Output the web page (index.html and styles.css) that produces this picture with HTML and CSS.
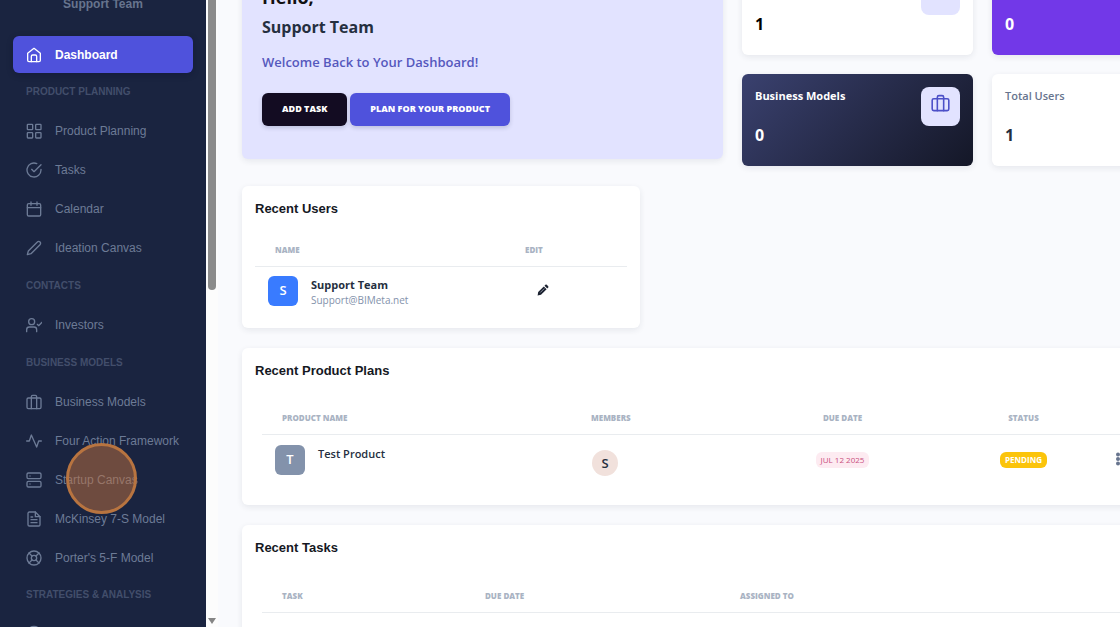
FILE: index.html
```html
<!DOCTYPE html>
<html lang="en">
<head>
<meta charset="utf-8">
<meta name="viewport" content="width=device-width, initial-scale=1">
<title>Dashboard</title>
<link rel="stylesheet" href="styles.css">
</head>
<body>
<div class="app">
  <aside class="sidebar">
    <div class="profile">Support Team</div>
    <nav class="nav" aria-label="Main">
      <a class="nav-link active" href="#"><svg class="icon" viewBox="0 0 24 24"><path d="M2.500 9.500 12 2l9.500 7.500V20a2 2 0 0 1-2 2h-15a2 2 0 0 1-2-2z"/><path d="M8 22v-8a2 2 0 0 1 2-2h4a2 2 0 0 1 2 2v8"/></svg>Dashboard</a>
      <h2 class="nav-title">PRODUCT PLANNING</h2>
      <a class="nav-link" href="#"><svg class="icon" viewBox="0 0 24 24"><rect x="2" y="2" width="8" height="8" rx="1"/><rect x="14.500" y="2" width="8" height="8" rx="1"/><rect x="14.500" y="14.500" width="8" height="8" rx="1"/><rect x="2" y="14.500" width="8" height="8" rx="1"/></svg>Product Planning</a>
      <a class="nav-link" href="#"><svg class="icon" viewBox="0 0 24 24"><path d="M22.500 11v1a10.500 10.500 0 1 1-6.300-9.600"/><path d="M22.500 4 12 14.500l-3.500-3.500"/></svg>Tasks</a>
      <a class="nav-link" href="#"><svg class="icon" viewBox="0 0 24 24"><rect x="2" y="4" width="20" height="18.500" rx="2"/><path d="M16.500 1.500v5M7.500 1.500v5M2 10h20"/></svg>Calendar</a>
      <a class="nav-link" href="#"><svg class="icon" viewBox="0 0 24 24"><path d="M17 3a2.830 2.830 0 1 1 4 4L7.500 20.500 2 22l1.500-5.500z"/></svg>Ideation Canvas</a>
      <h2 class="nav-title">CONTACTS</h2>
      <a class="nav-link" href="#"><svg class="icon" viewBox="0 0 24 24"><path d="M16 22v-3a4 4 0 0 0-4-4H5a4 4 0 0 0-4 4v3"/><circle cx="8.500" cy="7" r="4.500"/><path d="m17 11 2 2 5-5"/></svg>Investors</a>
      <h2 class="nav-title">BUSINESS MODELS</h2>
      <a class="nav-link" href="#"><svg class="icon" viewBox="0 0 24 24"><rect x="1.500" y="6" width="21" height="16" rx="2"/><path d="M16 22V4a2 2 0 0 0-2-2h-4a2 2 0 0 0-2 2v18"/></svg>Business Models</a>
      <a class="nav-link" href="#"><svg class="icon" viewBox="0 0 24 24"><path d="M23 12h-4l-3 9L8 3l-3 9H1"/></svg>Four Action Framework</a>
      <a class="nav-link" href="#"><svg class="icon" viewBox="0 0 24 24"><rect x="1.500" y="1.500" width="21" height="8.500" rx="2"/><rect x="1.500" y="14" width="21" height="8.500" rx="2"/><path d="M6 6h.01M6 18h.01"/></svg>Startup Canvas<span class="click-marker"></span></a>
      <a class="nav-link" href="#"><svg class="icon" viewBox="0 0 24 24"><path d="M14 1.500H5a2 2 0 0 0-2 2v17a2 2 0 0 0 2 2h14a2 2 0 0 0 2-2V8.500z"/><path d="M14 1.500v7h7M16.500 13h-9M16.500 17.500h-9M10 9H7.500"/></svg>McKinsey 7-S Model</a>
      <a class="nav-link" href="#"><svg class="icon" viewBox="0 0 24 24"><circle cx="12" cy="12" r="10.500"/><circle cx="12" cy="12" r="4"/><path d="m4.500 4.500 4.500 4.500M15 15l4.500 4.500M15 9l4.500-4.500M4.500 19.500 9 15"/></svg>Porter's 5-F Model</a>
      <h2 class="nav-title">STRATEGIES &amp; ANALYSIS</h2>
      <a class="nav-link" href="#" aria-label="More"><svg class="icon" viewBox="0 0 24 24"><circle cx="12" cy="12" r="10"/></svg></a>
    </nav>
  </aside>
  <div class="scrollbar" aria-hidden="true"><span class="thumb"></span><span class="arrow"></span></div>

  <main class="main">
    <div class="content">
      <div class="top">
        <section class="card banner">
          <h1 class="hello">Hello,</h1>
          <p class="who">Support Team</p>
          <p class="welcome">Welcome Back to Your Dashboard!</p>
          <div class="actions">
            <button class="btn dark" type="button">ADD TASK</button>
            <button class="btn" type="button">PLAN FOR YOUR PRODUCT</button>
          </div>
        </section>
        <div class="stats">
          <section class="card stat black"><div><h2 class="label">&nbsp;</h2><p class="value">1</p></div><span class="badge"></span></section>
          <section class="card stat purple"><div><h2 class="label">&nbsp;</h2><p class="value">0</p></div></section>
          <section class="card stat navy"><div><h2 class="label">Business Models</h2><p class="value">0</p></div><span class="badge"><svg class="icon" viewBox="0 0 24 24"><rect x="1.500" y="6" width="21" height="15" rx="2"/><path d="M16 21V4a2 2 0 0 0-2-2h-4a2 2 0 0 0-2 2v17"/></svg></span></section>
          <section class="card stat"><div><h2 class="label">Total Users</h2><p class="value">1</p></div></section>
        </div>
      </div>

      <section class="card panel users">
        <h2 class="panel-title">Recent Users</h2>
        <table class="table">
          <colgroup><col class="c-user"><col></colgroup>
          <thead><tr><th>NAME</th><th>EDIT</th></tr></thead>
          <tbody><tr>
            <td class="user"><div class="person"><span class="avatar blue">S</span><span><strong class="name">Support Team</strong><span class="mail">Support@BIMeta.net</span></span></div></td>
            <td class="edit"><button class="icon-btn" type="button" aria-label="Edit"><svg class="pencil" viewBox="0 0 12 12"><path d="M1.200 8 6.800 2.400 9.600 5.200 4 10.800 .6 11.400z"/><path d="M7.500 1.700 8.400.8a1 1 0 0 1 1.400 0l1.400 1.400a1 1 0 0 1 0 1.400l-.9.900z"/><path class="shine" d="M3.300 8.500 7.300 4.500"/></svg></button></td>
          </tr></tbody>
        </table>
      </section>

      <section class="card panel plans">
        <h2 class="panel-title">Recent Product Plans</h2>
        <table class="table inset">
          <colgroup><col class="c-plan"><col class="c-mid"><col class="c-mid"><col class="c-mid"><col></colgroup>
          <thead><tr><th>PRODUCT NAME</th><th>MEMBERS</th><th class="center">DUE DATE</th><th class="center">STATUS</th><th></th></tr></thead>
          <tbody><tr>
            <td><div class="person"><span class="avatar slate">T</span><strong class="name product">Test Product</strong></div></td>
            <td class="members"><span class="member">S</span></td>
            <td class="center"><span class="pill pink">JUL 12 2025</span></td>
            <td class="center"><span class="pill yellow">PENDING</span></td>
            <td class="more"><button class="icon-btn" type="button" aria-label="More actions"><svg class="dots" viewBox="0 0 4 14"><circle cx="2" cy="2.500" r="2"/><circle cx="2" cy="7" r="2"/><circle cx="2" cy="11.500" r="2"/></svg></button></td>
          </tr></tbody>
        </table>
      </section>

      <section class="card panel">
        <h2 class="panel-title">Recent Tasks</h2>
        <table class="table inset">
          <colgroup><col class="c-task"><col class="c-date"><col></colgroup>
          <thead><tr><th>TASK</th><th>DUE DATE</th><th>ASSIGNED TO</th></tr></thead>
          <tbody><tr><td colspan="3">&nbsp;</td></tr></tbody>
        </table>
      </section>
    </div>
  </main>
</div>
</body>
</html>
```
FILE: styles.css
```css
* { box-sizing: border-box; }
body {
  margin: 0;
  font-family: "Open Sans", "Noto Sans", sans-serif;
  font-size: 12px;
  color: #252f40;
  background: #f9fafd;
}
h1, h2, p { margin: 0; }
.app { display: flex; height: 100vh; overflow: hidden; }

.sidebar {
  flex: 0 0 206px;
  overflow: hidden;
  padding: 0 13px;
  background: #1a2440;
  font-family: "Liberation Sans", Arial, sans-serif;
}
.profile {
  margin-top: -4px;
  padding-bottom: 24px;
  line-height: 16px;
  text-align: center;
  font-weight: 700;
  color: #67748e;
}
.nav { display: flex; flex-direction: column; }
.nav-link {
  position: relative;
  display: flex;
  align-items: center;
  gap: 13px;
  height: 39px;
  padding: 0 13px;
  border-radius: 6px;
  color: #6d7b96;
  text-decoration: none;
  white-space: nowrap;
  flex: none;
}
.nav-link.active {
  height: 37px;
  background: #4f52dc;
  color: #fff;
  font-weight: 700;
  box-shadow: 0 2px 6px rgba(10, 14, 40, .3);
}
.nav-title {
  flex: none;
  padding: 0 13px;
  line-height: 37px;
  height: 38px;
  font-size: 10px;
  font-weight: 700;
  color: #424e6b;
  white-space: nowrap;
}
.nav-title:last-of-type { height: 36px; line-height: 36px; }
.icon {
  width: 16px;
  height: 16px;
  flex: none;
  fill: none;
  stroke: currentColor;
  stroke-width: 2;
  stroke-linecap: round;
  stroke-linejoin: round;
}
.click-marker {
  position: absolute;
  left: 53px;
  top: -17px;
  width: 71px;
  height: 71px;
  border: 3px solid #b87440;
  border-radius: 50%;
  background: rgba(194, 114, 62, .5);
}

.scrollbar {
  flex: 0 0 12px;
  display: flex;
  flex-direction: column;
  align-items: center;
  justify-content: space-between;
  padding-bottom: 3px;
  background: #fcfcfc;
}
.thumb { width: 8px; height: 290px; border-radius: 0 0 4px 4px; background: #8b8b8b; }
.arrow {
  border: 4px solid transparent;
  border-top: 6px solid #858585;
  border-bottom: 0;
}

.main { flex: 1; min-width: 0; overflow: hidden; }
.content {
  display: flex;
  flex-direction: column;
  gap: 20px;
  margin: -37px -103px 0 24px;
}
.card {
  border-radius: 6px;
  background: #fff;
  box-shadow: 0 2px 6px rgba(30, 40, 70, .09);
}
.top { display: grid; grid-template-columns: 1fr 1fr; gap: 19px; align-items: start; }
.banner { padding: 20px 20px 33px; background: #e2e3ff; }
.hello { line-height: 28px; font-size: 18px; font-weight: 700; color: #111; }
.who { padding-top: 4px; line-height: 24px; font-size: 16px; font-weight: 700; }
.welcome { padding-top: 12px; line-height: 22px; font-size: 13px; font-weight: 600; color: #5558bd; }
.actions { display: flex; gap: 3px; padding-top: 20px; }
.btn {
  height: 33px;
  padding: 0 20px 2px;
  border: 0;
  border-radius: 6px;
  background: #4f52dc;
  color: #fff;
  font-family: inherit;
  font-size: 9px;
  font-weight: 800;
  box-shadow: 0 2px 4px rgba(30, 40, 70, .18);
}
.btn.dark { background: #130c22; }

.stats { display: grid; grid-template-columns: 1fr 1fr; gap: 19px; }
.stat { display: flex; justify-content: space-between; padding: 13px 13px 19px; }
.label { line-height: 18px; font-size: 11px; font-weight: 600; color: #67748e; }
.value { padding-top: 18px; line-height: 24px; font-size: 16px; font-weight: 700; }
.black .value { color: #000; }
.purple { background: #7238e8; }
.navy { background: linear-gradient(135deg, #3a416f, #141727); }
.purple .value, .navy .value, .navy .label { color: #fff; }
.navy .label { font-weight: 700; }
.badge {
  display: flex;
  justify-content: center;
  width: 39px;
  height: 39px;
  padding-top: 7px;
  border-radius: 8px;
  background: #e2e3ff;
  color: #4c50c8;
}
.badge .icon { width: 19px; height: 19px; }

.panel { padding: 13px; }
.users { width: 398px; padding-bottom: 22px; }
.plans { padding-bottom: 29px; }
.panel-title {
  line-height: 20px;
  font-family: "Liberation Sans", Arial, sans-serif;
  font-size: 13px;
  font-weight: 700;
  color: #15181f;
}
.table { width: 100%; margin-top: 14px; border-collapse: collapse; table-layout: fixed; }
.table.inset { width: calc(100% - 14px); margin: 21px 7px 0; }
th {
  height: 33px;
  padding: 0 20px;
  border-bottom: 1px solid #e9ecef;
  text-align: left;
  font-size: 8px;
  font-weight: 800;
  color: #a9b3c3;
}
.center { text-align: center; }
td { padding: 10px 13px 0; vertical-align: top; }
td.user { padding-top: 9px; }
.c-user { width: 250px; }
.c-plan { width: 309px; }
.c-mid { width: 181px; }
.c-task { width: 203px; }
.c-date { width: 255px; }
.person { display: flex; gap: 13px; }
.avatar {
  display: flex;
  justify-content: center;
  width: 30px;
  height: 30px;
  border-radius: 6px;
  color: #fff;
  font-size: 13px;
  font-weight: 600;
  line-height: 28px;
}
.blue { background: #397bff; }
.slate { background: #8392ab; }
.name { display: block; line-height: 18px; font-size: 11px; font-weight: 700; }
.name.product { font-weight: 600; }
.mail { display: block; line-height: 12px; font-size: 10px; color: #8392ab; }
.edit { padding: 17px 32px 0; }
.icon-btn { display: block; padding: 0; border: 0; background: none; }
.pencil { display: block; width: 12px; height: 12px; fill: #1b2130; }
.shine { fill: none; stroke: #8a90a0; stroke-width: 1; }
.dots { display: block; width: 4px; height: 14px; fill: #67748e; }
.more { padding: 17px 0 0 2px; }
.members { padding: 15px 21px 0; }
.member {
  display: block;
  width: 26px;
  height: 26px;
  border-radius: 50%;
  background: #f1e1dc;
  line-height: 26px;
  text-align: center;
  font-size: 13px;
  font-weight: 600;
}
td.center { padding: 15px 0 0; }
.pill {
  display: inline-block;
  padding: 0 5px;
  border-radius: 6px;
  line-height: 16px;
  font-size: 8px;
  font-weight: 700;
}
.pink { background: #fdebf1; color: #c9517e; font-weight: 500; }
.yellow { background: #fbc40b; color: #fff; }
```
